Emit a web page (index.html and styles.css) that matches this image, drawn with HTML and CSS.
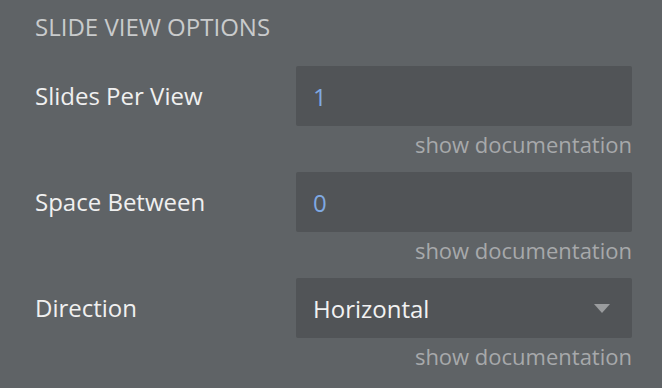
FILE: index.html
```html
<!DOCTYPE html>
<html lang="en">
<head>
    <meta charset="UTF-8">
    <title>Slide View Options</title>
    <link rel="stylesheet" href="styles.css">
</head>
<body>
    <div class="panel">
        <h2 class="section-title">SLIDE VIEW OPTIONS</h2>

        <div class="row">
            <label class="label">Slides Per View</label>
            <div class="field"><span class="value">1</span></div>
            <a class="doc">show documentation</a>
        </div>

        <div class="row">
            <label class="label">Space Between</label>
            <div class="field"><span class="value">0</span></div>
            <a class="doc">show documentation</a>
        </div>

        <div class="row">
            <label class="label">Direction</label>
            <div class="field dropdown">
                <span class="choice">Horizontal</span>
                <span class="caret"></span>
            </div>
            <a class="doc">show documentation</a>
        </div>
    </div>
</body>
</html>
```

FILE: styles.css
```css
body {
    margin: 0;
    padding: 0;
    background: #5f6366;
    font-family: "Open Sans", Arial, sans-serif;
    color: #eeeeee;
}
.panel {
    padding: 12px 30px 0 35px;
}
.section-title {
    margin: 0 0 24px 0;
    font-size: 24px;
    font-weight: normal;
    line-height: 30px;
    color: #c9cbcc;
}
.row {
    display: grid;
    grid-template-columns: 1fr 336px;
    align-items: center;
}
.label {
    font-size: 24px;
    line-height: 30px;
    color: #f0f0f0;
}
.field {
    height: 60px;
    display: flex;
    align-items: center;
    padding: 0 17px;
    background: #515457;
    border-radius: 2px;
    box-sizing: border-box;
    font-size: 24px;
}
.value {
    color: #7fa9e2;
}
.dropdown {
    justify-content: space-between;
}
.choice {
    color: #f2f2f2;
}
.caret {
    width: 0;
    height: 0;
    margin-right: 5px;
    border-left: 8px solid transparent;
    border-right: 8px solid transparent;
    border-top: 9px solid #9a9c9e;
}
.doc {
    grid-column: 2;
    text-align: right;
    font-size: 22px;
    line-height: 36px;
    margin-bottom: 10px;
    color: #a7a9ab;
}
```
